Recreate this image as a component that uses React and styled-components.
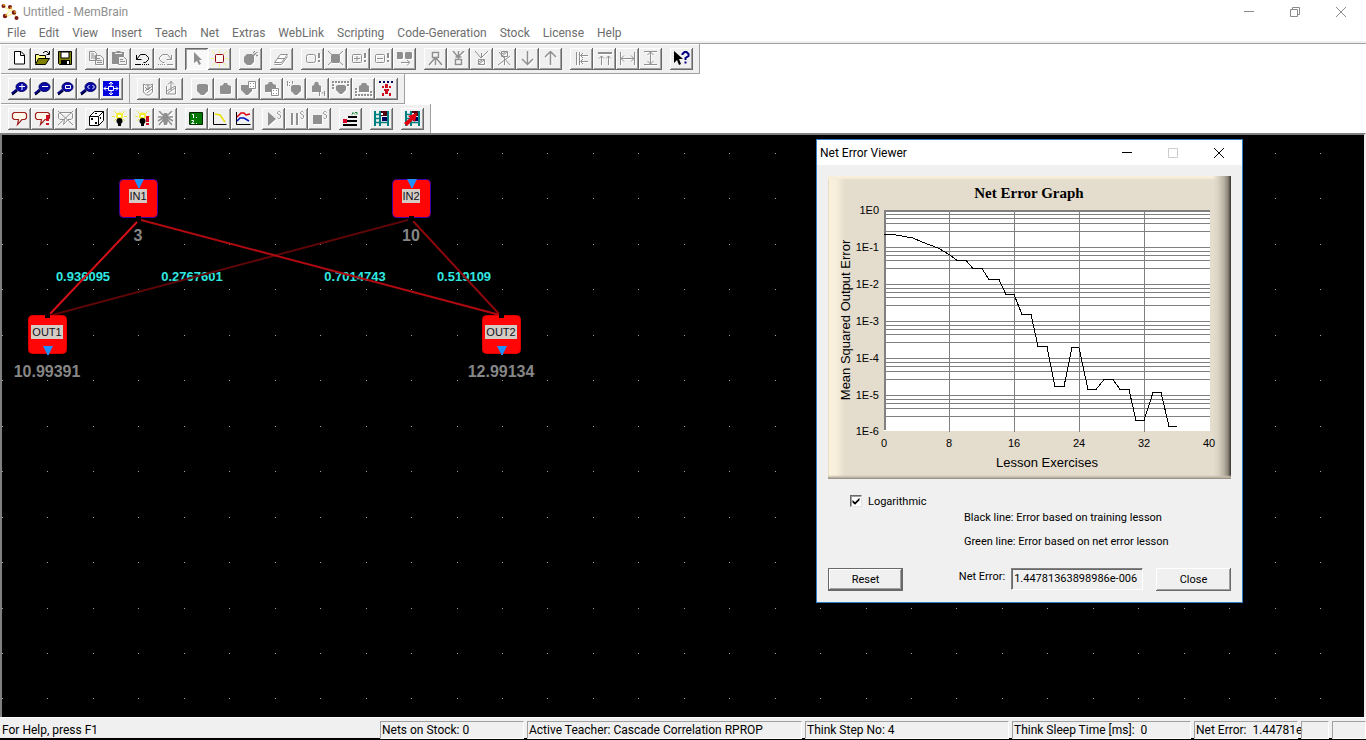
import React from 'react';
import styled, { createGlobalStyle, css } from 'styled-components';

const GlobalStyle = createGlobalStyle`
  *, *::before, *::after {
    box-sizing: border-box;
  }
  body {
    margin: 0;
    background: #ffffff;
    font-family: Roboto, 'Open Sans', sans-serif;
    font-size: 12px;
    color: #000000;
  }
  button, input {
    font: inherit;
    color: inherit;
    margin: 0;
    padding: 0;
  }
`;

const Window = styled.div`
  display: flex;
  flex-direction: column;
  min-height: 100vh;
`;

const TitleBar = styled.header`
  display: flex;
  align-items: center;
  height: ${({ $height }) => $height}px;
  padding: 0 ${({ $end }) => $end || 0}px 0 ${({ $indent }) => $indent}px;
  gap: 4px;
  background: #ffffff;
`;

const Title = styled.h1`
  flex: 1;
  margin: 0;
  font-size: 12px;
  font-weight: normal;
  line-height: 16px;
  color: ${({ $muted }) => ($muted ? '#8f8f8f' : '#000000')};
`;

const ControlSet = styled.div`
  display: flex;
`;

const WindowButton = styled.button`
  width: 46px;
  height: 20px;
  border: 0;
  background: none;
  display: grid;
  place-items: center;
  color: ${({ $tone }) => $tone};
`;

const MenuBar = styled.nav`
  display: flex;
  height: 20px;
  padding-left: 1px;
  border-bottom: 1px solid #a0a0a0;
  box-shadow: inset 0 -2px 0 #f0f0f0;
`;

const MenuItem = styled.button`
  height: 18px;
  padding: 0 7px 0 6px;
  border: 0;
  background: none;
  color: #6d6d6d;
  line-height: 18px;
  white-space: nowrap;
`;

const Toolbars = styled.div`
  padding-left: 1px;
`;

const ToolbarRow = styled.div`
  display: flex;

  &:last-child > div {
    border-bottom: 0;
  }
`;

const Toolbar = styled.div`
  display: flex;
  gap: 8px;
  padding: 4px 6px 3px 7px;
  background: #f0f0f0;
  border-right: 1px solid #a0a0a0;
  border-bottom: 1px solid #a0a0a0;
  box-shadow: inset 0 1px 0 #ffffff;
`;

const ToolGroup = styled.div`
  display: flex;
`;

const pressed = css`
  background: #f8f8f8;
  box-shadow: inset 1px 1px 0 #696969, inset -1px -1px 0 #ffffff, inset 2px 2px 0 #a0a0a0;
`;

const ToolButton = styled.button`
  width: 23px;
  height: 22px;
  padding: 3px;
  border: 0;
  display: block;
  background: #f0f0f0;
  box-shadow: inset -1px -1px 0 #696969, inset 1px 1px 0 #ffffff, inset -2px -2px 0 #a0a0a0;
  ${({ $pressed }) => $pressed && pressed}

  svg {
    display: block;
  }

  &:disabled svg {
    filter: drop-shadow(1px 1px 0 #ffffff);
  }
`;

const Workspace = styled.main`
  position: relative;
  flex: 1;
  overflow: hidden;
  background: #000000;
  border: solid;
  border-width: 2px 2px 0;
  border-color: #808080 #f0f0f0 #808080 #808080;
`;

const Diagram = styled.svg`
  display: block;
  position: absolute;
  inset: 0;
  font-family: 'Liberation Sans', Arial, sans-serif;
`;

const Dialog = styled.section`
  position: absolute;
  left: 814px;
  top: 4px;
  background: #f0f0f0;
  border: 1px solid #2d7dc8;
`;

const DialogBody = styled.div`
  padding: 11px;
  font-size: 11px;
`;

const GraphPanel = styled.figure`
  margin: 0;
  background:
    linear-gradient(to top, #8d8578, #c9c0b0 2px, transparent 4px),
    linear-gradient(to left, #35312c, #8c8578 3px, #b8b0a2 7px, #dad2c3 13px, transparent 18px),
    linear-gradient(to bottom, #faf1dd, #f6ecd8 2px, transparent 4px),
    linear-gradient(to right, #d9cba6, #faf1dd 1px, #f8efdb 8px, transparent 17px),
    #e4dccd;

  svg {
    display: block;
  }
`;

const CheckRow = styled.label`
  display: flex;
  align-items: center;
  gap: 6px;
  height: 16px;
  margin: 14px 0 1px 22px;
`;

const CheckBox = styled.input`
  appearance: none;
  width: 12px;
  height: 12px;
  background: #ffffff;
  border: 1px solid;
  border-color: #696969 #e3e3e3 #e3e3e3 #696969;
  box-shadow: inset 1px 1px 0 #a0a0a0;
  display: grid;
  place-items: center;

  &:checked::before {
    content: '';
    width: 8px;
    height: 8px;
    background: #000000;
    clip-path: polygon(6% 38%, 38% 66%, 94% 8%, 94% 42%, 38% 98%, 6% 70%);
  }
`;

const Notes = styled.div`
  display: grid;
  gap: 8px;
  padding-left: 136px;
  line-height: 16px;
`;

const Note = styled.p`
  margin: 0;
`;

const Actions = styled.div`
  display: flex;
  align-items: flex-start;
  justify-content: space-between;
  margin-top: 18px;
`;

const Field = styled.div`
  display: flex;
  gap: 6px;
  margin-left: 43px;

  label {
    line-height: 18px;
  }

  input {
    width: 132px;
    height: 22px;
    padding: 0 2px 2px;
    background: #f0f0f0;
    border: 1px solid;
    border-color: #808080 #ffffff #ffffff #808080;
    box-shadow: inset 1px 1px 0 #696969;
    outline: 0;
  }
`;

const PushButton = styled.button`
  width: 75px;
  height: 23px;
  padding-bottom: 1px;
  background: #f0f0f0;
  border: ${({ $default }) => ($default ? '1px solid #696969' : '0')};
  box-shadow: inset -1px -1px 0 #696969, inset 1px 1px 0 #ffffff, inset -2px -2px 0 #a0a0a0;
`;

const StatusBar = styled.footer`
  display: grid;
  grid-template-columns: 1fr 144px 275px 204px 179px 104px 28px 34px;
  gap: 3px;
  height: 23px;
  padding-top: 4px;
  padding-bottom: 1px;
  background: #f0f0f0;
  border-bottom: 2px solid #000000;
  box-shadow: inset 0 1px 0 #ffffff;
`;

const Pane = styled.div`
  padding-left: 1px;
  border: 1px solid;
  border-color: #a0a0a0 #ffffff #ffffff #a0a0a0;
  line-height: 16px;
  white-space: pre;

  &:first-child {
    border-color: transparent;
  }
`;

/* 17 x 16 glyphs, disabled ones in a single grey */
const G = '#8f8f8f';
const PIN = 'M14 2h2v5h-2zM14 9h2v2h-2z';

const Magnifier = ({ children }) => (
  <>
    <path d="M1 13l5-4" stroke="#000080" strokeWidth="3" />
    <path d="M1 14l5-4" stroke="#000" />
    <ellipse cx="10.500" cy="6" rx="5.500" ry="4.500" fill="#0a0aa8" stroke="#000060" />
    <g stroke="#fff" fill="none">{children}</g>
  </>
);

const NetFrame = () => (
  <>
    <path d="M2 0v15M7 0v15M15 0v15" stroke="#008080" strokeWidth="2" />
    <path d="M2 3.500h6M2 7.500h6M2 11.500h13" stroke="#008080" strokeWidth="1.500" />
    <path d="M8 0h6v5h-6z" fill="#500010" />
    <path d="M9 6h5v4h-5z" fill="#000060" />
    <path d="M8 2h2v2h-2z" fill="#fff" />
  </>
);

const Bulb = () => (
  <>
    <path d="M3 0l3 3M14 0l-3 3M1 5.500h3M13 5.500h3M3 10l2-2M14 10l-2-2" stroke="#f0e840" />
    <circle cx="8.500" cy="5" r="3.500" fill="#f5ee30" />
    <circle cx="8.500" cy="10" r="3" fill="#000" />
    <path d="M7 12h3v3h-3z" fill="#000" />
    <path d="M7 4h3v2h-3z" fill="#fff" />
  </>
);

const Bubble = ({ color }) => (
  <path d="M3 1.500h11l1.500 1.500v4l-1.500 1.500h-3l-4.500 5 1-5h-4.500l-1.500-1.500v-4z" fill="#fff8e8" stroke={color} strokeWidth="1.200" />
);

const ScriptS = () => <path d="M15.500 1.500l-1-1h-1l-1 1v1l3 2v2l-1 1h-1l-1-1" fill="none" stroke={G} />;

const ICONS = {
  'New': <path d="M3.500.5h6.500l3.500 3.500v9h-10zM9.500.5v4h4" fill="#fff" stroke="#000" />,
  'Open': (
    <>
      <path d="M1.500 12.500v-9h3l1 1h6v3" fill="#ffff80" stroke="#000" />
      <path d="M1.500 13.500l3-6h11l-4 6z" fill="#808000" stroke="#000" />
      <path d="M9 2l2-1.500h2l2 2.500M15.500 0v3.500h-3" fill="none" stroke="#000" />
    </>
  ),
  'Save': (
    <>
      <path d="M1.500.5h13v13h-12l-1-1z" fill="#808000" stroke="#000" />
      <path d="M4 1h8v6h-8z" fill="#fff" stroke="#000" />
      <path d="M4 9h9v5h-9z" fill="#000" />
      <path d="M10 10h2v3h-2z" fill="#fff" />
    </>
  ),
  'Copy': <path d="M1.500.5h5l2 2v7h-7zM3 3h3M3 5h4M3 7h4M7.500 4.500h5l3 3v6h-8zM9 7.500h3M9 9.500h5M9 11.500h5" fill="#f0f0f0" stroke={G} />,
  'Paste': (
    <>
      <path d="M1 1h4l1-1h3l1 1h3v12h-12z" fill={G} />
      <path d="M4 2.500h7" stroke="#f0f0f0" />
      <path d="M7.500 5.500h5l3 3v5h-8zM9 8.500h3M9 10.500h5" fill="#f0f0f0" stroke={G} />
    </>
  ),
  'Undo': <path d="M2.500 4v4.500h5M2.500 8.500l4-5h5l3 3v2l-3 3h-2M1 13.500h6M8 13.500h1M10 13.500h1M12 13.500h1M14 13.500h1" fill="none" stroke="#000" />,
  'Redo': <path d="M14.500 4v4.500h-5M14.500 8.500l-4-5h-5l-3 3v2l3 3h2M10 13.500h6M1 13.500h1M3 13.500h1M5 13.500h1M7 13.500h1" fill="none" stroke={G} />,
  'Select': <path d="M6 1v11l3-2 2 4 2-1-2-4h3z" fill={G} />,
  'Insert neuron': (
    <>
      <path d="M1 0l3 3M8.500 0v2M16 0l-3 3M0 7.500h3M14 7.500h3M1 15l3-3M8.500 13v3M16 15l-3-3" stroke="#f4ec80" />
      <rect x="4.500" y="3.500" width="8" height="8" rx="1" fill="#fff8f0" stroke="#900010" />
    </>
  ),
  'Randomize': (
    <>
      <path d="M5 3h5l2 2v6l-3 3h-4l-3-3v-5z" fill={G} />
      <path d="M11 5l3-3M12 0.500h1M15 1v1M14 4.500h2M11 1.500h1" stroke={G} strokeWidth="1.500" />
    </>
  ),
  'Erase': <path d="M1.500 11.500l6-8h7l-6 8zM1.500 13.500h7l6-8M5 7.500h7" fill="#fff" stroke={G} />,
  'Activate neuron': <><rect x="2.500" y="3.500" width="9" height="8" rx="2" fill="none" stroke={G} /><path d={PIN} fill={G} /></>,
  'Delete neuron': <><rect x="4" y="3" width="9" height="9" rx="2" fill={G} /><path d="M1 0l15 14M16 0L1 14" stroke={G} /></>,
  'Add to output': <><rect x="2.500" y="3.500" width="9" height="8" rx="1" fill="none" stroke={G} /><path d="M4 7.500h6M7 5v5" stroke={G} /><path d={PIN} fill={G} /></>,
  'Remove from output': <><rect x="2.500" y="3.500" width="9" height="8" rx="1" fill="none" stroke={G} /><path d="M4 7.500h6" stroke={G} /><path d={PIN} fill={G} /></>,
  'Replace neurons': <><path d="M1 1h5l1 1v5l-1 1h-5zM10 1h5l1 1v5l-1 1h-5l-1-1v-5z" fill={G} /><path d="M5 11.500h8M11 9l3 2.500-3 3" fill="none" stroke={G} /></>,
  'Add output link': <path d="M5.500 1.500h6v5h-6zM8.500 7v7M8 7l-6 7M9 7l6 7" fill="none" stroke={G} strokeWidth="1.500" />,
  'Add input link': <path d="M5.500 8.500h6v5h-6zM8.500 0v8M3 0l5 6 6-6M5.500 6h6" fill="none" stroke={G} strokeWidth="1.500" />,
  'Remove input link': <path d="M5.500 8.500h6v5h-6zM2 0l6 7 7-7M8.500 2v5M6 13l5-4M6 11l3-2" fill="none" stroke={G} />,
  'Remove output link': <path d="M5.500.5h6v5h-6zM6 5l5-4M6 3l3-2M8.500 6v8M3 1l11 13M14 5l-12 9" fill="none" stroke={G} />,
  'Move down': <path d="M8.500 0v13M3 8l5.500 5.500 5.500-5.500" fill="none" stroke={G} strokeWidth="1.500" />,
  'Move up': <path d="M8.500 14v-13M3 6l5.500-5.500 5.500 5.500" fill="none" stroke={G} strokeWidth="1.500" />,
  'Align left': <path d="M3.500 1v13M6.500 1v13M8 4.500h7M8 10.500h7M10 2L7.500 4.500l2.500 2.500M10 8l-2.500 2.500 2.500 2.500" fill="none" stroke={G} />,
  'Align top': <path d="M2 1.500h14M2 2.500h14M5.500 5v9M12.500 5v9M3 7.500l2.500-2.500 2.500 2.500M10 7.500l2.500-2.500 2.500 2.500" fill="none" stroke={G} />,
  'Same width': <path d="M1.500 1v13M15.500 1v13M2 7.500h13M5 4.500l-3 3 3 3M12 4.500l3 3-3 3" fill="none" stroke={G} />,
  'Same height': <path d="M2 .5h13M2 13.500h13M8.500 1v12M5.500 4l3-3 3 3M5.500 10l3 3 3-3" fill="none" stroke={G} />,
  'Context help': (
    <>
      <path d="M1 0v12l3-3 2 5 2-1-2-5h4z" fill="#000" />
      <path d="M9.500 4v-1l2-2h2l2 2v2l-3 2v2" fill="none" stroke="#000080" strokeWidth="2" />
      <path d="M11.500 10.500h2v2h-2z" fill="#000080" />
    </>
  ),
  'Zoom in': <Magnifier><path d="M8 5.500h6M11 3v6" /></Magnifier>,
  'Zoom out': <Magnifier><path d="M8 5.500h6" /></Magnifier>,
  'Zoom window': <Magnifier><path d="M8.500 4.500h5v3h-5z" /></Magnifier>,
  'Zoom previous': <Magnifier><path d="M9.500 4l-2 2 2 2M12.500 4l2 2-2 2" /></Magnifier>,
  'Zoom fit': (
    <>
      <path d="M0 0h16v15h-16z" fill="#0000e0" />
      <path d="M5.500 5.500h5v4h-5zM8 1v4M8 10v4M1 7.500h4M11 7.500h4M6 3l2-2 2 2M6 12l2 2 2-2M3 5.500l-2 2 2 2M13 5.500l2 2-2 2" fill="none" stroke="#fff" />
    </>
  ),
  'Import weights': <path d="M3.500 3v8l3 3h3l3-3v-8l-2 1h-5zM8 3v5M5 6l3 3 4-4M5 10l5-4M7 12l5-4" fill="none" stroke={G} />,
  'Export weights': <path d="M3.500 5v8h9v-8M8 9v-9M5 3.500l3-3 3 3M4 10l8-5M5 12l7-5" fill="none" stroke={G} />,
  'Input group': <path d="M3 4l2-1h7l2 1v6l-4 4h-3l-4-4z" fill={G} />,
  'Output group': <path d="M3 5l3-1 1-2h3l1 2 3 1v7l-1 1h-9l-1-1z" fill={G} />,
  'Input matrix': <><path d="M1 4h8l3 4v2l-4 4h-2l-5-5z" fill={G} /><path d="M8.500.5h7v7h-7z" fill="#fff" stroke={G} /><path d="M10 2h1v1h-1zM13 2h1v1h-1zM10 5h1v1h-1zM13 5h1v1h-1z" fill={G} /></>,
  'Output matrix': <><path d="M2 4l3-1 1-2h3l1 2 3 1v7h-11z" fill={G} /><path d="M8.500 7.500h7v7h-7z" fill="#fff" stroke={G} /><path d="M10 9h1v1h-1zM13 9h1v1h-1zM10 12h1v1h-1zM13 12h1v1h-1z" fill={G} /></>,
  'Input one to one': <><path d="M5 5l2-1h6l2 1v5l-4 4h-2l-4-4z" fill={G} /><path d="M1.500 0v5M6.500 0v3M3 1.500h1M3 4.500h1" stroke={G} /></>,
  'Output one to one': <><path d="M3 5l2-1 1-3h3l1 3 2 1v6h-9z" fill={G} /><path d="M10.500 10v5M15.500 10v5M12.500 12h2" stroke={G} /></>,
  'Group inputs': <><path d="M4 5l2-1h6l2 1v4l-4 4h-2l-4-4z" fill={G} /><path d="M0 1h17M0 4h3M15 4h2M0 7h3" stroke={G} strokeWidth="2" strokeDasharray="2 1" /></>,
  'Group outputs': <><path d="M4 5l2-1 1-2h4l1 2 2 1v6h-10z" fill={G} /><path d="M0 8h3M0 11h3M0 14h17M15 11h2" stroke={G} strokeWidth="2" strokeDasharray="2 1" /></>,
  'Fit connections': (
    <>
      <path d="M1 1h15" stroke="#000060" strokeWidth="2" strokeDasharray="2 2" />
      <path d="M7 3h3v4h-3zM6 8h5v2h-5zM7 10h3v3h-3zM4 5h2v2h-2zM11 5h2v2h-2zM4 12h2v3h-2zM11 12h2v3h-2z" fill="#d01020" />
    </>
  ),
  'Think on input': <Bubble color="#a02020" />,
  'Think step': <><Bubble color="#a02020" /><path d="M12 4h3v6h-3zM12 12h3v2h-3z" fill="#d01020" /></>,
  'Stop thinking': <path d="M3 1.500h11l1.500 1.500v4l-1.500 1.500h-3l-4.500 5 1-5h-4.500l-1.500-1.500v-4zM1 0l15 14M16 0L1 14" fill="none" stroke={G} />,
  'Randomize net': (
    <>
      <path d="M1.500 5.500l5-5h9v9l-5 5h-9zM1.500 5.500h9v9M10.500 5.500l5-5" fill="#fff" stroke="#000" />
      <path d="M3 7h2v2h-2zM7 11h2v2h-2zM12 6h1v2h-1zM7 2h2v1h-2z" fill="#000" />
    </>
  ),
  'Start teacher': <Bulb />,
  'Teach step': <><Bulb /><path d="M12 5h3v6h-3zM12 12h3v2h-3z" fill="#d01020" /></>,
  'Stop teacher': <><path d="M7 2h3l1 2v6l-1 4h-3l-1-4v-6z" fill={G} /><path d="M2 0l5 5M15 0l-5 5M1 6h5l5 0h5M2 14l5-6M15 14l-5-6M1 10l5-3M16 10l-5-3" stroke={G} strokeWidth="1.500" /></>,
  'Lesson editor': (
    <>
      <path d="M1.500 1.500h13v12h-13z" fill="#007800" stroke="#002800" />
      <path d="M4 3.500h1.500v3.500M8 6.500h1M3.500 9.500h2v1.500l-2 1.500h3M8 12.500h1" fill="none" stroke="#fff" />
    </>
  ),
  'Error viewer': <><path d="M2.500 1v12.500h13" fill="none" stroke="#000" /><path d="M4 3l5 1 5 7" fill="none" stroke="#e8e000" strokeWidth="1.500" /></>,
  'Activity viewer': (
    <>
      <path d="M2.500 1v12.500h14" fill="none" stroke="#000" />
      <path d="M3 6l4-4h3l2 2 4-1" fill="none" stroke="#e00010" strokeWidth="1.500" />
      <path d="M3 10l3-3h4l5 3" fill="none" stroke="#0010c0" strokeWidth="1.500" />
    </>
  ),
  'Run script': <><path d="M3 1l8 7-8 7z" fill={G} /><ScriptS /></>,
  'Pause script': <><path d="M4 2v12M9 2v12" stroke={G} strokeWidth="2" /><ScriptS /></>,
  'Stop script': <><path d="M2 4h9v9h-9z" fill={G} /><ScriptS /></>,
  'Teacher manager': (
    <>
      <path d="M6 6h9M1 10h14M1 14h14" stroke="#000" strokeWidth="2" />
      <path d="M1 8h4v4h-4z" fill="#e00020" />
      <path d="M10 3.500l1-2 2 2M13 1.500h2v2" fill="none" stroke="#108030" />
    </>
  ),
  'Net stock': <NetFrame />,
  'Load from stock': <><NetFrame /><path d="M0 12l6-5-2-2 9-3-2 9-2-2-6 6z" fill="#e00010" /></>,
};

/* rows > toolbars > groups; a leading "-" marks a disabled tool */
const TOOLBARS = [
  [
    [
      ['New', 'Open', 'Save'],
      ['-Copy', '-Paste', 'Undo', '-Redo'],
      ['-Select', 'Insert neuron'],
      ['-Randomize'],
      ['-Erase'],
      ['-Activate neuron', '-Delete neuron', '-Add to output', '-Remove from output', '-Replace neurons'],
      ['-Add output link', '-Add input link', '-Remove input link', '-Remove output link', '-Move down', '-Move up'],
      ['-Align left', '-Align top', '-Same width', '-Same height'],
      ['Context help'],
    ],
  ],
  [
    [['Zoom in', 'Zoom out', 'Zoom window', 'Zoom previous', 'Zoom fit']],
    [
      ['-Import weights', '-Export weights'],
      ['-Input group', '-Output group', '-Input matrix', '-Output matrix', '-Input one to one',
        '-Output one to one', '-Group inputs', '-Group outputs', 'Fit connections'],
    ],
  ],
  [
    [
      ['Think on input', 'Think step', '-Stop thinking'],
      ['Randomize net', 'Start teacher', 'Teach step', '-Stop teacher'],
      ['Lesson editor', 'Error viewer', 'Activity viewer'],
      ['-Run script', '-Pause script', '-Stop script'],
      ['Teacher manager'],
      ['Net stock'],
      ['Load from stock'],
    ],
  ],
];

const MENUS = [
  'File', 'Edit', 'View', 'Insert', 'Teach', 'Net', 'Extras', 'WebLink',
  'Scripting', 'Code-Generation', 'Stock', 'License', 'Help',
];

const Tool = ({ id }) => {
  const disabled = id.startsWith('-');
  const name = disabled ? id.slice(1) : id;

  return (
    <ToolButton aria-label={name} disabled={disabled} $pressed={name === 'Select'}>
      <svg width="17" height="16" viewBox="0 0 17 16">{ICONS[name]}</svg>
    </ToolButton>
  );
};

const AppLogo = () => (
  <svg width="18" height="18" viewBox="0 0 18 18">
    <path d="M3 4l6 3 4 3M4 13l5-6M5 14l8-4 3 6M9 3l4 7" stroke="#fbf0a8" strokeWidth="1.500" fill="none" />
    <g fill="#7a1a10">
      <circle cx="2.500" cy="3" r="2" /><circle cx="9" cy="4" r="2" />
      <circle cx="4" cy="13" r="2.200" /><circle cx="13" cy="9.500" r="2.200" />
      <circle cx="15.500" cy="15" r="2" />
    </g>
    <g fill="#e8a020"><circle cx="3" cy="2" r="1" /><circle cx="10" cy="5" r="1" /><circle cx="5" cy="12" r="1" /><circle cx="14" cy="9" r="1" /></g>
  </svg>
);

const GLYPHS = {
  Minimize: <path d="M0 4.500h10" />,
  Restore: <path d="M.5 2.500h7v7h-7zM2.500 2.500v-2h7v7h-2" />,
  Maximize: <path d="M.5.5h9v9h-9z" />,
  Close: <path d="M0 0l10 10M10 0L0 10" />,
};

const Control = ({ name, tone }) => (
  <WindowButton aria-label={name} $tone={tone}>
    <svg width="10" height="10" viewBox="0 0 10 10" fill="none" stroke="currentColor">{GLYPHS[name]}</svg>
  </WindowButton>
);

/* diagram coordinates start at the workspace's inner corner */
const GRID = 45.45;
const LINKS = [
  { from: [406, 85], to: [50, 180], color: '#5e0508', width: 2 },
  { from: [411, 86], to: [498, 180], color: '#8c080c', width: 2 },
  { from: [139, 85], to: [498, 180], color: '#ae0a10', width: 2 },
  { from: [135, 87], to: [48, 179], color: '#d41018', width: 2 },
];
const WEIGHTS = [
  { x: 81, value: '0.936095' },
  { x: 190, value: '0.2767601' },
  { x: 353, value: '0.7014743' },
  { x: 462, value: '0.519109' },
];
const NEURONS = [
  { x: 136, y: 64, name: 'IN1', value: '3', input: true },
  { x: 409, y: 64, name: 'IN2', value: '10', input: true },
  { x: 45, y: 200, name: 'OUT1', value: '10.99391' },
  { x: 499, y: 200, name: 'OUT2', value: '12.99134' },
];

const Neuron = ({ x, y, name, value, input }) => {
  const label = input ? 18 : 32;
  const tip = input ? -20 : 11;

  return (
    <g transform={`translate(${x} ${y})`} textAnchor="middle">
      <rect x="-18.500" y="-19.500" width="38" height="38" rx="4" fill="#ff0505" stroke={input ? '#3a00a0' : '#e00000'} />
      <rect x={-label / 2} y="-10" width={label} height="14" fill="#d4ccc4" />
      <text y="1" fontSize="11" fill="#101020">{name}</text>
      <path d={`M-4 ${tip}h10l-4 8v1h-2v-1z`} fill="#1e90ff" />
      <rect x="-2" y={input ? 17 : -22} width="5" height="5" fill="#000" />
      <text y="42" fontSize="16" fontWeight="bold" fill="#868686">{value}</text>
    </g>
  );
};

const NetDiagram = () => (
  <Diagram width="100%" height="100%">
    {Array.from({ length: 13 }, (_, row) =>
      Array.from({ length: 30 }, (_, col) => (
        <rect
          key={`${row}-${col}`}
          x={Math.round(col * GRID)}
          y={Math.round(18 + row * GRID)}
          width="1"
          height="1"
          fill="#a0a0a0"
        />
      )))}
    {WEIGHTS.map(({ x, value }) => (
      <text key={value} x={x} y="146" fontSize="13" fontWeight="bold" fill="#30e8e0" textAnchor="middle">{value}</text>
    ))}
    {LINKS.map(({ from, to, color, width }) => (
      <line key={color} x1={from[0]} y1={from[1]} x2={to[0]} y2={to[1]} stroke={color} strokeWidth={width} />
    ))}
    {NEURONS.map((neuron) => <Neuron key={neuron.name} {...neuron} />)}
  </Diagram>
);

const CURVE = `56,58.5 65,58.5 85,62 94,66 110,72 122,79 129,84.5 138,84.5 145,92.5 154,92.5
  161,103.5 171,103.5 178,118.5 186,118.5 194,138.5 203,138.5 210,170.5 219,170.5 227,210.5
  236,210.5 244,171.5 251,171.5 260,213.5 268,213.5 276,203.5 285,203.5 292,213.5 301,213.5
  308,244.5 316,244.5 325,216.5 333,216.5 341,250.5 349,250.5`;

const ErrorGraph = () => (
  <svg width="403" height="303" viewBox="0 0 403 303" fontFamily="'Liberation Sans', Arial, sans-serif">
    <rect x="56" y="34" width="326" height="221" fill="#ffffff" />
    <g fill="#808080">
      {[0, 1, 2, 3, 4, 5].map((decade) =>
        [0, 4, 8, 13, 21].map((offset) => (
          <rect key={`${decade}-${offset}`} x="56" y={34 + decade * 37 + offset} width="326" height="1" />
        )))}
      {[1, 2, 3, 4].map((i) => <rect key={i} x={56 + i * 65} y="34" width="1" height="222" />)}
      <rect x="56" y="34" width="326" height="2" />
      <rect x="56" y="34" width="2" height="220" />
    </g>
    <polyline points={CURVE} fill="none" stroke="#000000" shapeRendering="crispEdges" />
    <text x="201" y="22" fontSize="15" fontWeight="bold" fontFamily="'Liberation Serif', serif" textAnchor="middle">Net Error Graph</text>
    <g fontSize="11" textAnchor="end">
      {[0, 1, 2, 3, 4, 5, 6].map((n) => (
        <text key={n} x="51" y={38 + n * 37 - (n === 6 ? 1 : 0)}>{n ? `1E-${n}` : '1E0'}</text>
      ))}
    </g>
    <g fontSize="11" textAnchor="middle">
      {[0, 8, 16, 24, 32, 40].map((n, i) => <text key={n} x={56 + i * 65} y="271">{n}</text>)}
    </g>
    <g fontSize="13" textAnchor="middle">
      <text x="219" y="291">Lesson Exercises</text>
      <text transform="translate(22 144) rotate(-90)">Mean Squared Output Error</text>
    </g>
  </svg>
);

const NetErrorViewer = () => (
  <Dialog role="dialog" aria-label="Net Error Viewer">
    <TitleBar as="div" $height={25} $indent={3}>
      <Title as="h2">Net Error Viewer</Title>
      <ControlSet>
        <Control name="Minimize" tone="#000000" />
        <Control name="Maximize" tone="#cccccc" />
        <Control name="Close" tone="#000000" />
      </ControlSet>
    </TitleBar>
    <DialogBody>
      <GraphPanel><ErrorGraph /></GraphPanel>
      <CheckRow>
        <CheckBox type="checkbox" defaultChecked />
        Logarithmic
      </CheckRow>
      <Notes>
        <Note>Black line: Error based on training lesson</Note>
        <Note>Green line: Error based on net error lesson</Note>
      </Notes>
      <Actions>
        <PushButton $default>Reset</PushButton>
        <Field>
          <label htmlFor="net-error">Net Error:</label>
          <input id="net-error" readOnly value="1.44781363898986e-006" />
        </Field>
        <PushButton>Close</PushButton>
      </Actions>
    </DialogBody>
  </Dialog>
);

const STATUS = [
  'For Help, press F1',
  'Nets on Stock: 0',
  'Active Teacher: Cascade Correlation RPROP',
  'Think Step No: 4',
  'Think Sleep Time [ms]:  0',
  'Net Error:  1.44781e',
  '',
  '',
];

const App = () => (
  <>
    <GlobalStyle />
    <Window>
      <TitleBar $height={24} $indent={1} $end={2}>
        <AppLogo />
        <Title $muted>Untitled - MemBrain</Title>
        <ControlSet>
          <Control name="Minimize" tone="#8a8a8a" />
          <Control name="Restore" tone="#8a8a8a" />
          <Control name="Close" tone="#8a8a8a" />
        </ControlSet>
      </TitleBar>
      <MenuBar>
        {MENUS.map((menu) => <MenuItem key={menu}>{menu}</MenuItem>)}
      </MenuBar>
      <Toolbars>
        {TOOLBARS.map((row, r) => (
          <ToolbarRow key={r}>
            {row.map((bar, b) => (
              <Toolbar key={b} role="toolbar">
                {bar.map((group) => (
                  <ToolGroup key={group[0]}>
                    {group.map((id) => <Tool key={id} id={id} />)}
                  </ToolGroup>
                ))}
              </Toolbar>
            ))}
          </ToolbarRow>
        ))}
      </Toolbars>
      <Workspace>
        <NetDiagram />
        <NetErrorViewer />
      </Workspace>
      <StatusBar>
        {STATUS.map((text, i) => <Pane key={i}>{text}</Pane>)}
      </StatusBar>
    </Window>
  </>
);

export default App;
